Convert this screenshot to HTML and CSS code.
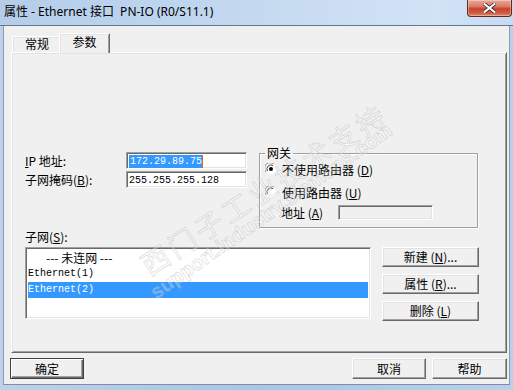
FILE: index.html
```html
<!DOCTYPE html>
<html lang="zh">
<head>
<meta charset="utf-8">
<title>属性 - Ethernet 接口 PN-IO (R0/S11.1)</title>
<link rel="stylesheet" href="styles.css">
</head>
<body>
<div class="titlebar">
  <span class="title">属性 - Ethernet 接口&nbsp; PN-IO (R0/S11.1)</span>
  <div class="close">
    <svg width="13" height="10" viewBox="0 0 13 10"><path d="M1.5 1 L11.5 9 M11.5 1 L1.5 9" stroke="#3a2a2a" stroke-width="3.6" stroke-linecap="square"/><path d="M1.5 1 L11.5 9 M11.5 1 L1.5 9" stroke="#ffffff" stroke-width="2" stroke-linecap="square"/></svg>
  </div>
</div>
<div class="client">
  <div class="tabs">
    <div class="tab">常规</div>
    <div class="tab active">参数</div>
  </div>
  <div class="panel">
    <div class="toprow">
      <div class="addr">
        <div class="frow">
          <span class="lbl"><u>I</u>P 地址:</span>
          <div class="field"><span class="sel mono">172.29.89.75</span><span class="caret"></span></div>
        </div>
        <div class="frow">
          <span class="lbl">子网掩码(<u>B</u>):</span>
          <div class="field"><span class="mono">255.255.255.128</span></div>
        </div>
      </div>
      <fieldset class="gw">
        <legend>网关</legend>
        <div class="rrow first">
          <svg class="radio" width="12" height="12" viewBox="0 0 12 12"><circle cx="6" cy="6" r="5.5" fill="#ffffff"/><path d="M1.2 9 A5.3 5.3 0 0 1 9 1.2" fill="none" stroke="#8a8a8a" stroke-width="1"/><path d="M2.5 8 A4 4 0 0 1 8 2.5" fill="none" stroke="#404040" stroke-width="1"/><circle cx="6" cy="6" r="2" fill="#000"/></svg>
          <span>不使用路由器 (<u>D</u>)</span>
        </div>
        <div class="rrow">
          <svg class="radio" width="12" height="12" viewBox="0 0 12 12"><circle cx="6" cy="6" r="5.5" fill="#ffffff"/><path d="M1.2 9 A5.3 5.3 0 0 1 9 1.2" fill="none" stroke="#8a8a8a" stroke-width="1"/><path d="M2.5 8 A4 4 0 0 1 8 2.5" fill="none" stroke="#404040" stroke-width="1"/></svg>
          <span>使用路由器 (<u>U</u>)</span>
        </div>
        <div class="arow">
          <span class="albl">地址 (<u>A</u>)</span>
          <div class="field dis"></div>
        </div>
      </fieldset>
    </div>
    <div class="sublbl">子网(<u>S</u>):</div>
    <div class="subrow">
      <div class="list">
        <div class="item none">--- 未连网 ---</div>
        <div class="item mono">Ethernet(1)</div>
        <div class="item mono on">Ethernet(2)</div>
      </div>
      <div class="btncol">
        <div class="btn">新建 (<u>N</u>)...</div>
        <div class="btn">属性 (<u>R</u>)...</div>
        <div class="btn">删除 (<u>L</u>)</div>
      </div>
    </div>
  </div>
  <div class="footer">
    <div class="btn big def">确定</div>
    <div class="spacer"></div>
    <div class="btn big">取消</div>
    <div class="btn big">帮助</div>
  </div>
</div>
<div class="watermark">
  <span class="wm1">西门子工业技术支持</span>
  <span class="wm2">support.industry.siemens.com</span>
</div>
</body>
</html>
```
FILE: styles.css
```css
* { box-sizing: border-box; }
html, body { margin: 0; padding: 0; }
body {
  width: 513px;
  height: 390px;
  overflow: hidden;
  position: relative;
  background: linear-gradient(90deg, #bcd2ea 0%, #aac6e6 50%, #b8d0ec 100%);
  font-family: "Noto Sans CJK SC", sans-serif;
  font-size: 12px;
  color: #000;
}
u { text-decoration: underline; text-underline-offset: 1px; }

.titlebar {
  height: 26px;
  display: flex;
  justify-content: space-between;
  align-items: flex-start;
  background: linear-gradient(90deg, #b5cde9 0%, #bcd4ee 30%, #c9dcf1 60%, #d2e3f6 85%, #c6daf1 100%);
  border-bottom: 1px solid #62778f;
}
.title {
  padding: 4px 0 0 4px;
  font-family: "Noto Sans", "Noto Sans CJK SC", sans-serif;
  font-size: 12px;
  line-height: 16px;
  white-space: pre;
  color: #000;
}
.close {
  width: 45px;
  height: 17px;
  margin-right: 1px;
  border: 1px solid #5e2a22;
  border-top: none;
  border-radius: 0 0 4px 4px;
  background: linear-gradient(#eaa797 0%, #dc7b66 40%, #c5432c 55%, #cf5a3f 80%, #e0866a 100%);
  display: flex;
  align-items: center;
  justify-content: center;
  box-shadow: inset 0 0 0 1px rgba(255,255,255,0.35);
}

.client {
  margin: 0 3px;
  height: 359px;
  background: #f0f0f0;
  border-left: 1px solid #8c9aab;
  border-right: 1px solid #8c9aab;
  border-bottom: 1px solid #7f8ea0;
  padding-top: 7px;
  display: flex;
  flex-direction: column;
}

.tabs {
  display: flex;
  align-items: flex-end;
  height: 19px;
  padding-left: 8px;
}
.tab {
  width: 47px;
  height: 16px;
  border: 1px solid #a0a0a0;
  border-bottom: none;
  border-top-color: #fff;
  border-left-color: #fff;
  border-right: none;
  line-height: 14px;
  text-align: center;
  padding-left: 2px;
  box-shadow: inset 1px 1px 0 #e3e3e3;
}
.tab.active {
  width: 51px;
  height: 20px;
  margin-bottom: -1px;
  position: relative;
  z-index: 2;
  background: #f0f0f0;
  border-right: 1px solid #696969;
  box-shadow: inset 1px 1px 0 #e3e3e3, inset -1px 0 0 #a0a0a0;
  line-height: 16px;
  padding-left: 0;
}

.panel {
  margin-left: 7px;
  width: 496px;
  height: 301px;
  border: 1px solid;
  border-color: #fff #696969 #696969 #fff;
  box-shadow: inset 1px 1px 0 #e3e3e3, inset -1px -1px 0 #a0a0a0;
  padding: 94px 0 0 13px;
}

.toprow { display: flex; align-items: flex-start; }
.addr {
  width: 222px;
  padding-top: 5px;
  display: flex;
  flex-direction: column;
  gap: 2px;
}
.frow { display: flex; align-items: center; height: 17px; }
.lbl { width: 101px; line-height: 17px; white-space: nowrap; }

.field {
  height: 17px;
  width: 121px;
  background: #fff;
  border: 1px solid;
  border-color: #a0a0a0 #fff #fff #a0a0a0;
  box-shadow: inset 1px 1px 0 #696969, inset -1px -1px 0 #e3e3e3;
  padding: 1px 0 0 2px;
  display: flex;
  align-items: center;
}
.mono {
  font-family: "Liberation Mono", "Noto Sans CJK SC", monospace;
  font-size: 10px;
  line-height: 13px;
}
.sel { background: #3399ff; color: #fff; padding: 0 0 0 1px; }
.caret { width: 1px; height: 13px; background: #e8601c; }

.gw {
  margin: 0 0 0 12px;
  padding: 0 0 7px 5px;
  width: 219px;
  min-inline-size: 0;
  border: 1px solid #a0a0a0;
  box-shadow: inset 1px 1px 0 #fff, 1px 1px 0 #fff;
}
.gw legend {
  padding: 0 2px;
  margin-left: 0px;
  line-height: 12px;
  font-size: 12px;
}
.rrow {
  display: flex;
  align-items: center;
  height: 16px;
  gap: 5px;
  margin-top: 7px;
}
.rrow.first { margin-top: 2px; }
.radio { flex: none; }
.arow {
  display: flex;
  align-items: center;
  height: 15px;
  margin-top: 5px;
  padding-left: 16px;
}
.albl { width: 57px; }
.field.dis { width: 95px; height: 15px; background: #f0f0f0; }

.sublbl { margin-top: 2px; line-height: 14px; height: 16px; }
.subrow { display: flex; align-items: flex-start; margin-top: 1px; }
.list {
  width: 346px;
  height: 72px;
  background: #fff;
  border: 1px solid;
  border-color: #a0a0a0 #fff #fff #a0a0a0;
  box-shadow: inset 1px 1px 0 #696969, inset -1px -1px 0 #e3e3e3;
  padding: 2px 2px 0 2px;
}
.item {
  height: 16px;
  line-height: 16px;
  white-space: pre;
  padding-left: 0;
}
.item.none { padding-left: 18px; font-size: 12px; }
.item.mono { font-size: 10px; line-height: 16px; }
.item.on { background: #3399ff; color: #fff; }

.btncol {
  margin-left: 11px;
  display: flex;
  flex-direction: column;
  gap: 7px;
}
.btn {
  width: 97px;
  height: 20px;
  border: 1px solid;
  border-color: #fff #696969 #696969 #fff;
  box-shadow: inset -1px -1px 0 #a0a0a0, inset 1px 1px 0 #e3e3e3;
  background: #f0f0f0;
  text-align: center;
  line-height: 18px;
  white-space: nowrap;
}

.footer {
  display: flex;
  margin-top: 5px;
  padding-left: 6px;
  gap: 6px;
}
.spacer { flex: none; width: 256px; }
.btn.big { width: 74px; height: 21px; line-height: 19px; }
.btn.big:last-child { width: 75px; }
.btn.def {
  border: 1px solid #404040;
  box-shadow: inset 1px 1px 0 #fff, inset -1px -1px 0 #696969, inset -2px -2px 0 #a0a0a0;
}

.watermark {
  position: absolute;
  inset: 0;
  pointer-events: none;
  overflow: hidden;
}
.wm1, .wm2 {
  position: absolute;
  white-space: nowrap;
  color: rgba(255,255,255,0.3);
  -webkit-text-stroke: 0.7px rgba(150,150,150,0.35);
  transform-origin: 0 0;
  font-family: "Noto Sans CJK SC", sans-serif;
}
.wm1 {
  left: 132px;
  top: 250px;
  font-size: 28px;
  letter-spacing: 4px;
  transform: rotate(-33deg);
}
.wm2 {
  left: 146px;
  top: 285px;
  font-size: 20px;
  font-family: "Liberation Sans", sans-serif;
  font-weight: bold;
  transform: rotate(-35deg);
}
```
